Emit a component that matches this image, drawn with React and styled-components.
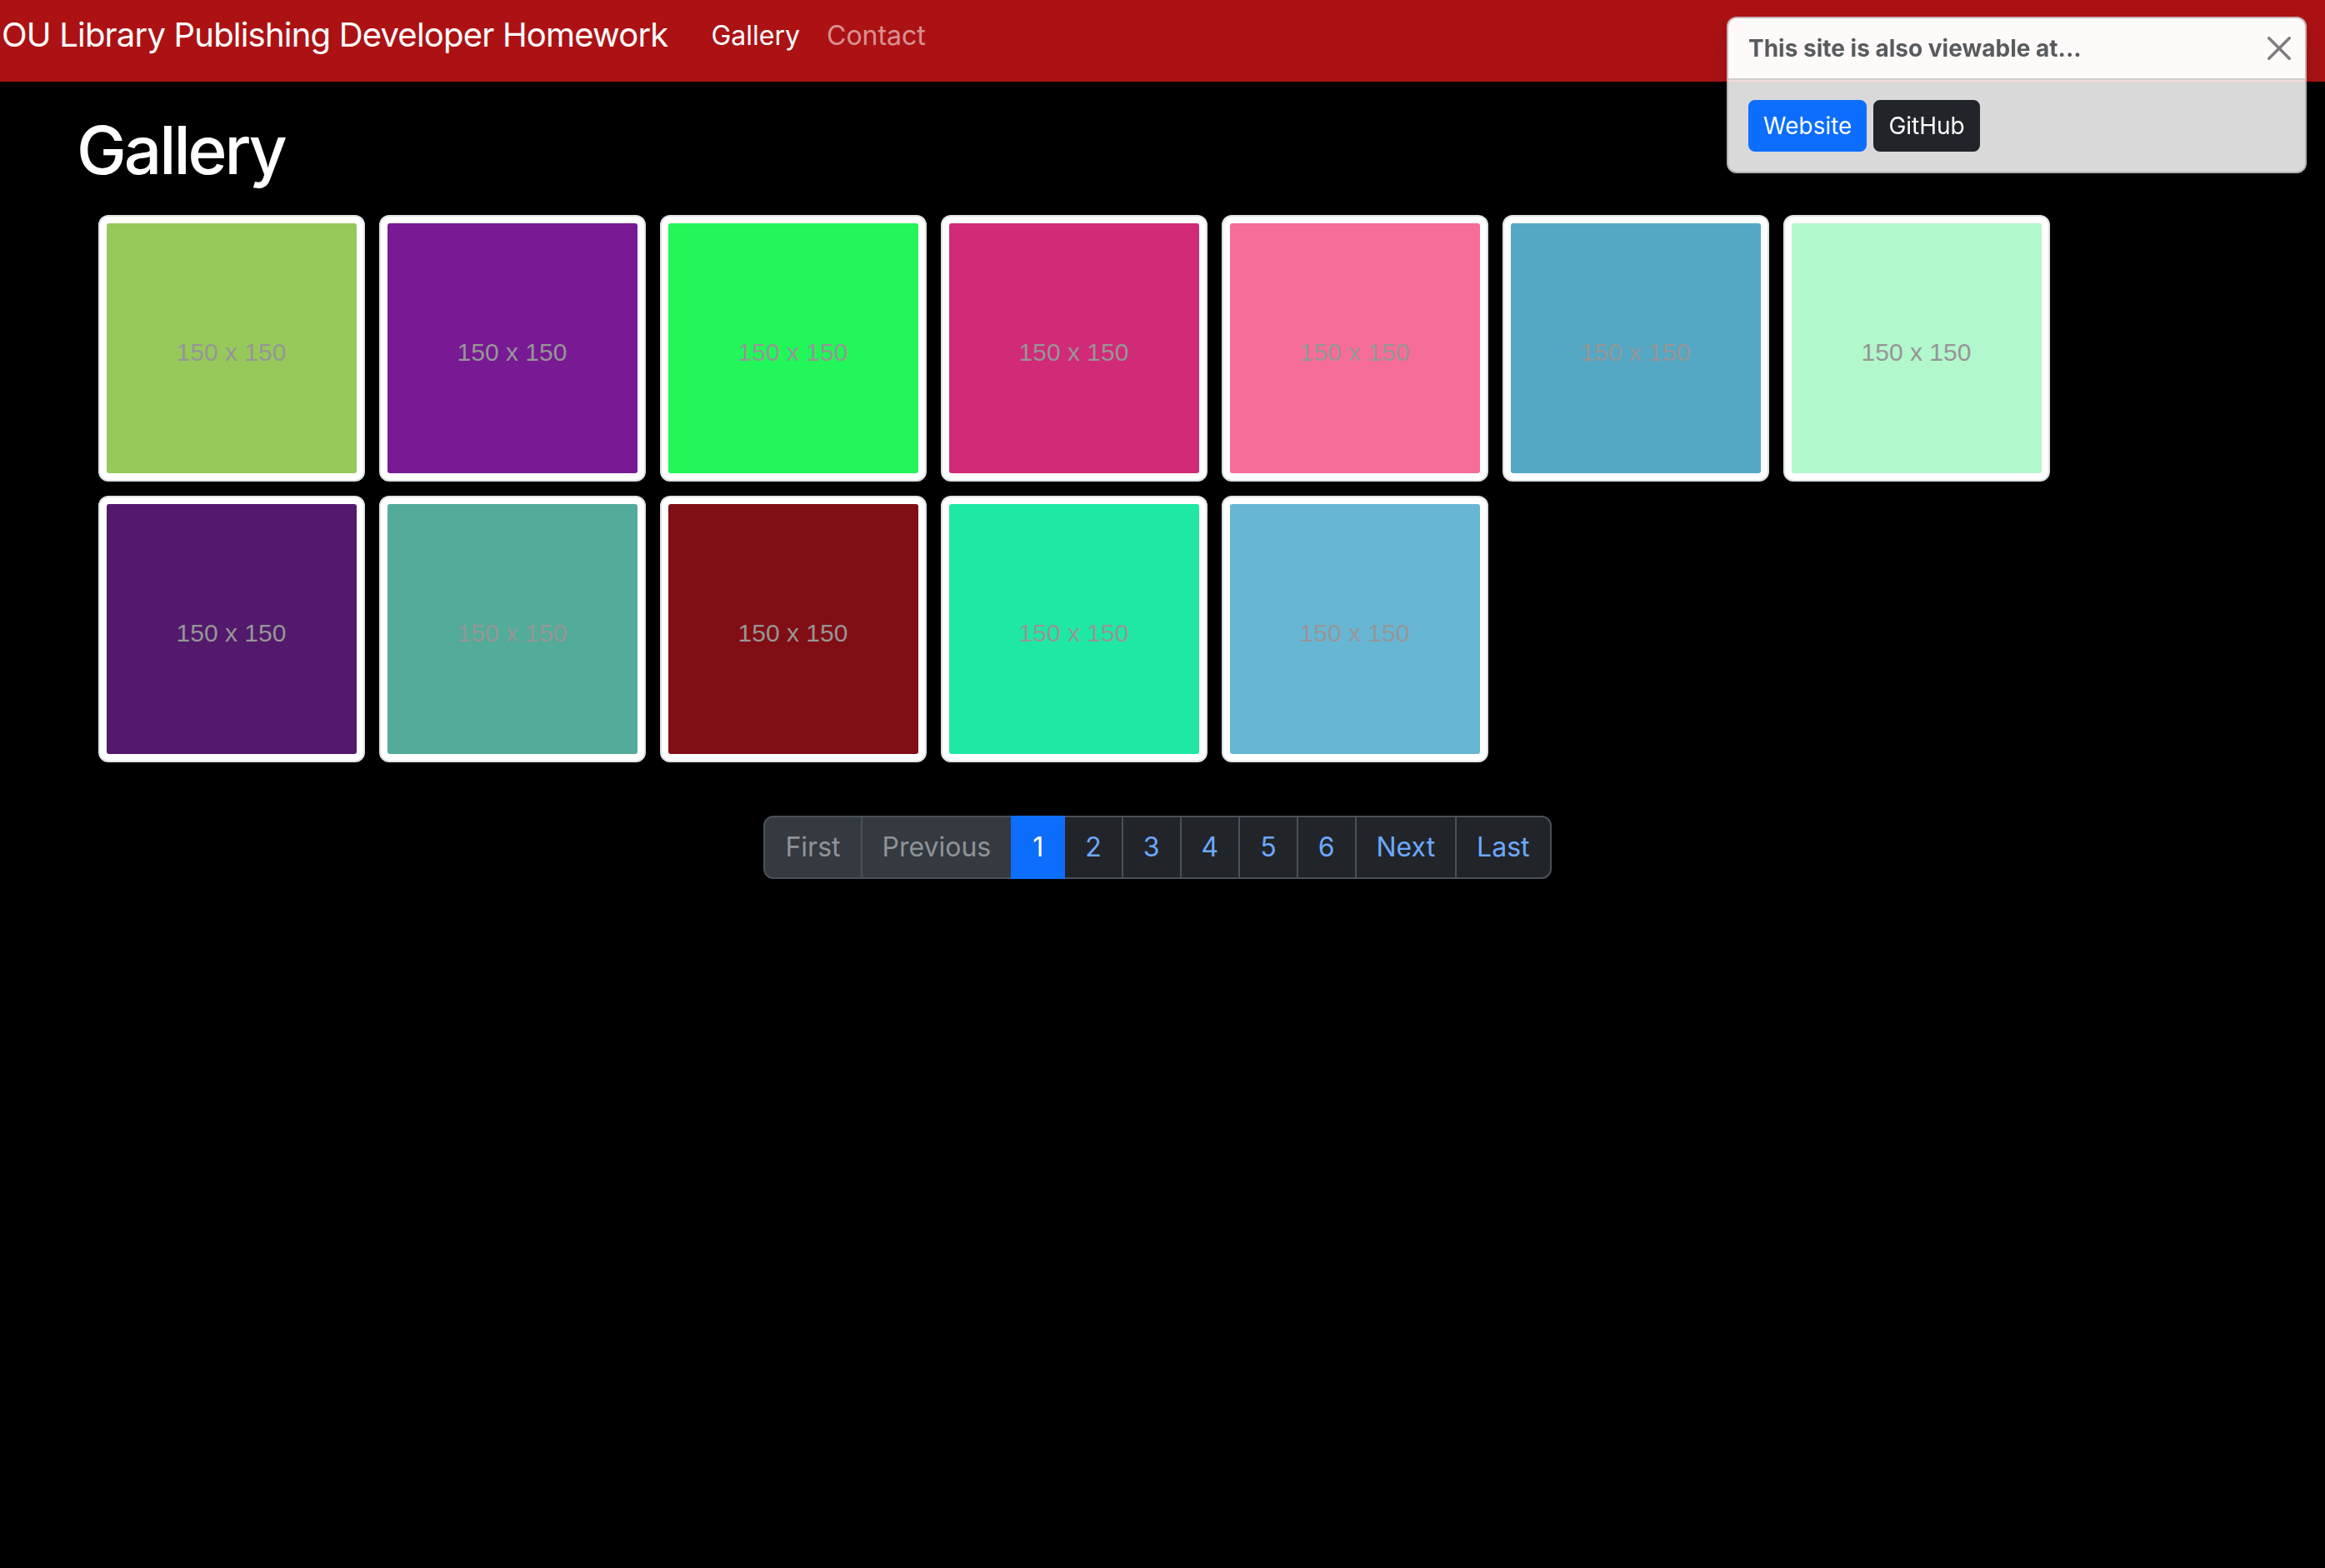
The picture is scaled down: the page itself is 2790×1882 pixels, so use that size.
import React from "react";
import styled, { createGlobalStyle } from "styled-components";

const GlobalStyle = createGlobalStyle`
  html, body {
    margin: 0;
    padding: 0;
    background: #000;
  }
  body {
    font-family: Inter, "Noto Sans", Roboto, sans-serif;
    color: #fff;
  }
  * {
    box-sizing: border-box;
  }
`;

const images = [
  "#97c95a", "#781a94", "#22f658", "#d12a76", "#f66d98", "#55a8c4",
  "#b3f7cc", "#53196c", "#53ab99", "#820e15", "#1fe8a4", "#67b6d4",
];

const pages = [
  { label: "First", disabled: true },
  { label: "Previous", disabled: true },
  { label: "1", active: true },
  { label: "2" },
  { label: "3" },
  { label: "4" },
  { label: "5" },
  { label: "6" },
  { label: "Next" },
  { label: "Last" },
];

const App = () => {
  return (
    <>
      <GlobalStyle />
      <Navbar>
        <Brand>OU Library Publishing Developer Homework</Brand>
        <NavLink $active>Gallery</NavLink>
        <NavLink>Contact</NavLink>
      </Navbar>

      <Main>
        <Title>Gallery</Title>
        <Grid>
          {images.map((c, i) => (
            <Thumb key={i}>
              <Placeholder $bg={c}>150 x 150</Placeholder>
            </Thumb>
          ))}
        </Grid>
        <PagerRow>
          <Pager>
            {pages.map((p) => (
              <PageItem key={p.label} $active={p.active} $disabled={p.disabled}>
                {p.label}
              </PageItem>
            ))}
          </Pager>
        </PagerRow>
      </Main>

      <Toast>
        <ToastHeader>
          <ToastTitle>This site is also viewable at...</ToastTitle>
          <CloseButton aria-label="Close">
            <svg width="28" height="28" viewBox="0 0 16 16">
              <path
                fill="#000"
                d="M.293.293a1 1 0 0 1 1.414 0L8 6.586 14.293.293a1 1 0 1 1 1.414 1.414L9.414 8l6.293 6.293a1 1 0 0 1-1.414 1.414L8 9.414l-6.293 6.293a1 1 0 0 1-1.414-1.414L6.586 8 .293 1.707a1 1 0 0 1 0-1.414"
              />
            </svg>
          </CloseButton>
        </ToastHeader>
        <ToastBody>
          <Button $bg="#0d6efd">Website</Button>
          <Button $bg="#212529">GitHub</Button>
        </ToastBody>
      </Toast>
    </>
  );
};

const Navbar = styled.nav`
  display: flex;
  align-items: flex-start;
  height: 98px;
  padding-left: 2px;
  background: #ac1214;
`;

const Brand = styled.a`
  margin: 12px 36px 0 0;
  font-size: 40px;
  line-height: 60px;
  letter-spacing: -0.8px;
  color: #fff;
  white-space: nowrap;
`;

const NavLink = styled.a`
  margin-top: 19px;
  padding: 0 16px;
  font-size: 32px;
  line-height: 48px;
  color: ${(p) => (p.$active ? "#fff" : "rgba(255, 255, 255, 0.55)")};
`;

const Main = styled.main`
  padding-top: 34px;
`;

const Title = styled.h1`
  margin: 0 0 30px 92px;
  font-size: 80px;
  line-height: 96px;
  font-weight: 500;
  letter-spacing: -3px;
`;

const Grid = styled.div`
  display: grid;
  grid-template-columns: repeat(7, 320px);
  gap: 17px;
  margin-left: 117.5px;
`;

const Thumb = styled.div`
  width: 320px;
  height: 320px;
  padding: 8px;
  background: #fff;
  border: 2px solid #dee2e6;
  border-radius: 12px;
`;

const Placeholder = styled.div`
  width: 300px;
  height: 300px;
  padding-top: 10px;
  border-radius: 3px;
  background: ${(p) => p.$bg};
  display: flex;
  align-items: center;
  justify-content: center;
  font-family: "Liberation Sans", Arial, sans-serif;
  font-size: 30px;
  color: #969696;
`;

const PagerRow = styled.div`
  display: flex;
  justify-content: center;
  padding-right: 12px;
  margin-top: 64px;
`;

const Pager = styled.ul`
  display: flex;
  list-style: none;
  margin: 0;
  padding: 0;
`;

const PageItem = styled.li`
  font-size: 32px;
  line-height: 48px;
  padding: 12px 24px;
  border: 2px solid ${(p) => (p.$active ? "#0d6efd" : "#495057")};
  margin-left: -2px;
  background: ${(p) => (p.$active ? "#0d6efd" : p.$disabled ? "#343a40" : "#212529")};
  color: ${(p) => (p.$active ? "#fff" : p.$disabled ? "#8f9398" : "#6ea8fe")};
  position: relative;
  z-index: ${(p) => (p.$active ? 1 : 0)};

  &:first-child {
    margin-left: 0;
    border-radius: 12px 0 0 12px;
  }
  &:last-child {
    border-radius: 0 12px 12px 0;
  }
`;

const Toast = styled.div`
  position: fixed;
  top: 20px;
  right: 22px;
  width: 696px;
  background: rgba(255, 255, 255, 0.85);
  border: 2px solid rgba(0, 0, 0, 0.175);
  border-radius: 12px;
  box-shadow: 0 16px 32px rgba(0, 0, 0, 0.15);
  overflow: hidden;
`;

const ToastHeader = styled.div`
  display: flex;
  align-items: center;
  padding: 16px 24px;
  background: rgba(255, 255, 255, 0.85);
  border-bottom: 2px solid rgba(0, 0, 0, 0.175);
`;

const ToastTitle = styled.strong`
  flex: 1;
  font-size: 28px;
  line-height: 40px;
  font-weight: 700;
  color: rgba(33, 37, 41, 0.75);
`;

const CloseButton = styled.button`
  display: flex;
  padding: 0;
  margin-right: -7px;
  border: 0;
  background: transparent;
  opacity: 0.5;
`;

const ToastBody = styled.div`
  display: flex;
  gap: 8px;
  padding: 24px;
`;

const Button = styled.button`
  font-family: inherit;
  font-size: 28px;
  line-height: 42px;
  padding: 8px 16px;
  border: 2px solid ${(p) => p.$bg};
  border-radius: 8px;
  background: ${(p) => p.$bg};
  color: #fff;
`;

export default App;
